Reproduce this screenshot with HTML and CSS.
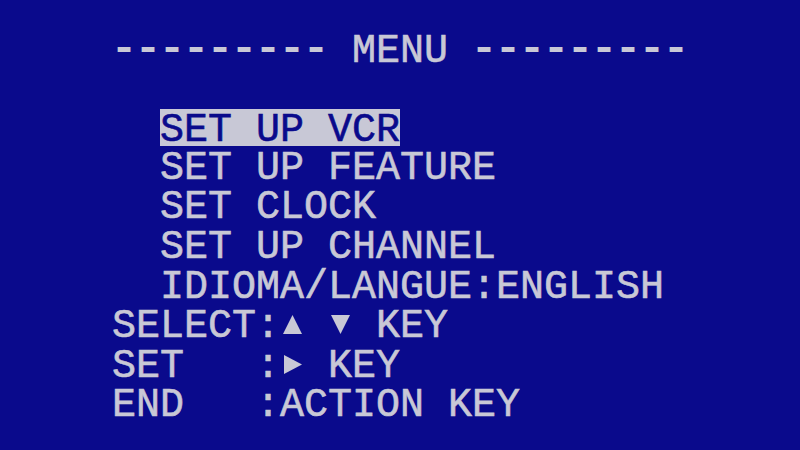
FILE: index.html
```html
<!DOCTYPE html>
<html lang="en">
<head>
  <meta charset="UTF-8" />
  <meta name="viewport" content="width=device-width, initial-scale=1" />
  <title>VCR Menu</title>
  <link rel="stylesheet" href="styles.css">
</head>
<body>

  <div class="osd">
    <div class="line"><span class="rule">---------</span> MENU <span class="rule">---------</span></div>
    <div class="line"></div>
    <div class="line">  <span class="selected">SET UP VCR</span></div>
    <div class="line">  SET UP FEATURE</div>
    <div class="line">  SET CLOCK</div>
    <div class="line">  SET UP CHANNEL</div>
    <div class="line">  IDIOMA/LANGUE:ENGLISH</div>
    <div class="line">SELECT:<svg class="arrow" width="24" height="40" viewBox="0 0 24 40"><polygon points="3,27 12.5,8 22,27" /></svg> <svg class="arrow" width="24" height="40" viewBox="0 0 24 40"><polygon points="3,8 22,8 12.5,27" /></svg> KEY</div>
    <div class="line">SET   :<svg class="arrow" width="24" height="40" viewBox="0 0 24 40"><polygon points="4,8 22,17.5 4,27" /></svg> KEY</div>
    <div class="line">END   :ACTION KEY</div>
  </div>

</body>
</html>
```

FILE: styles.css
```css
body {
  margin: 0;
  background-color: #0a0a8c;
  color: #c8c8d6;
  font-family: 'Liberation Mono', 'DejaVu Sans Mono', monospace;
}

.osd {
  width: 800px;
  height: 450px;
  box-sizing: border-box;
  padding: 30px 0 0 112px;
  font-size: 40px;
  line-height: 39.6px;
  -webkit-text-stroke: 0.6px currentColor;
}

.line {
  height: 39.6px;
  white-space: pre;
}

.rule {
  vertical-align: 2px;
  -webkit-text-stroke: 1.8px currentColor;
}

.selected {
  display: inline-block;
  line-height: 30px;
  padding-top: 7px;
  background-color: #c8c8d6;
  color: #0a0a8c;
}

.arrow {
  vertical-align: top;
  fill: #c8c8d6;
}
```
